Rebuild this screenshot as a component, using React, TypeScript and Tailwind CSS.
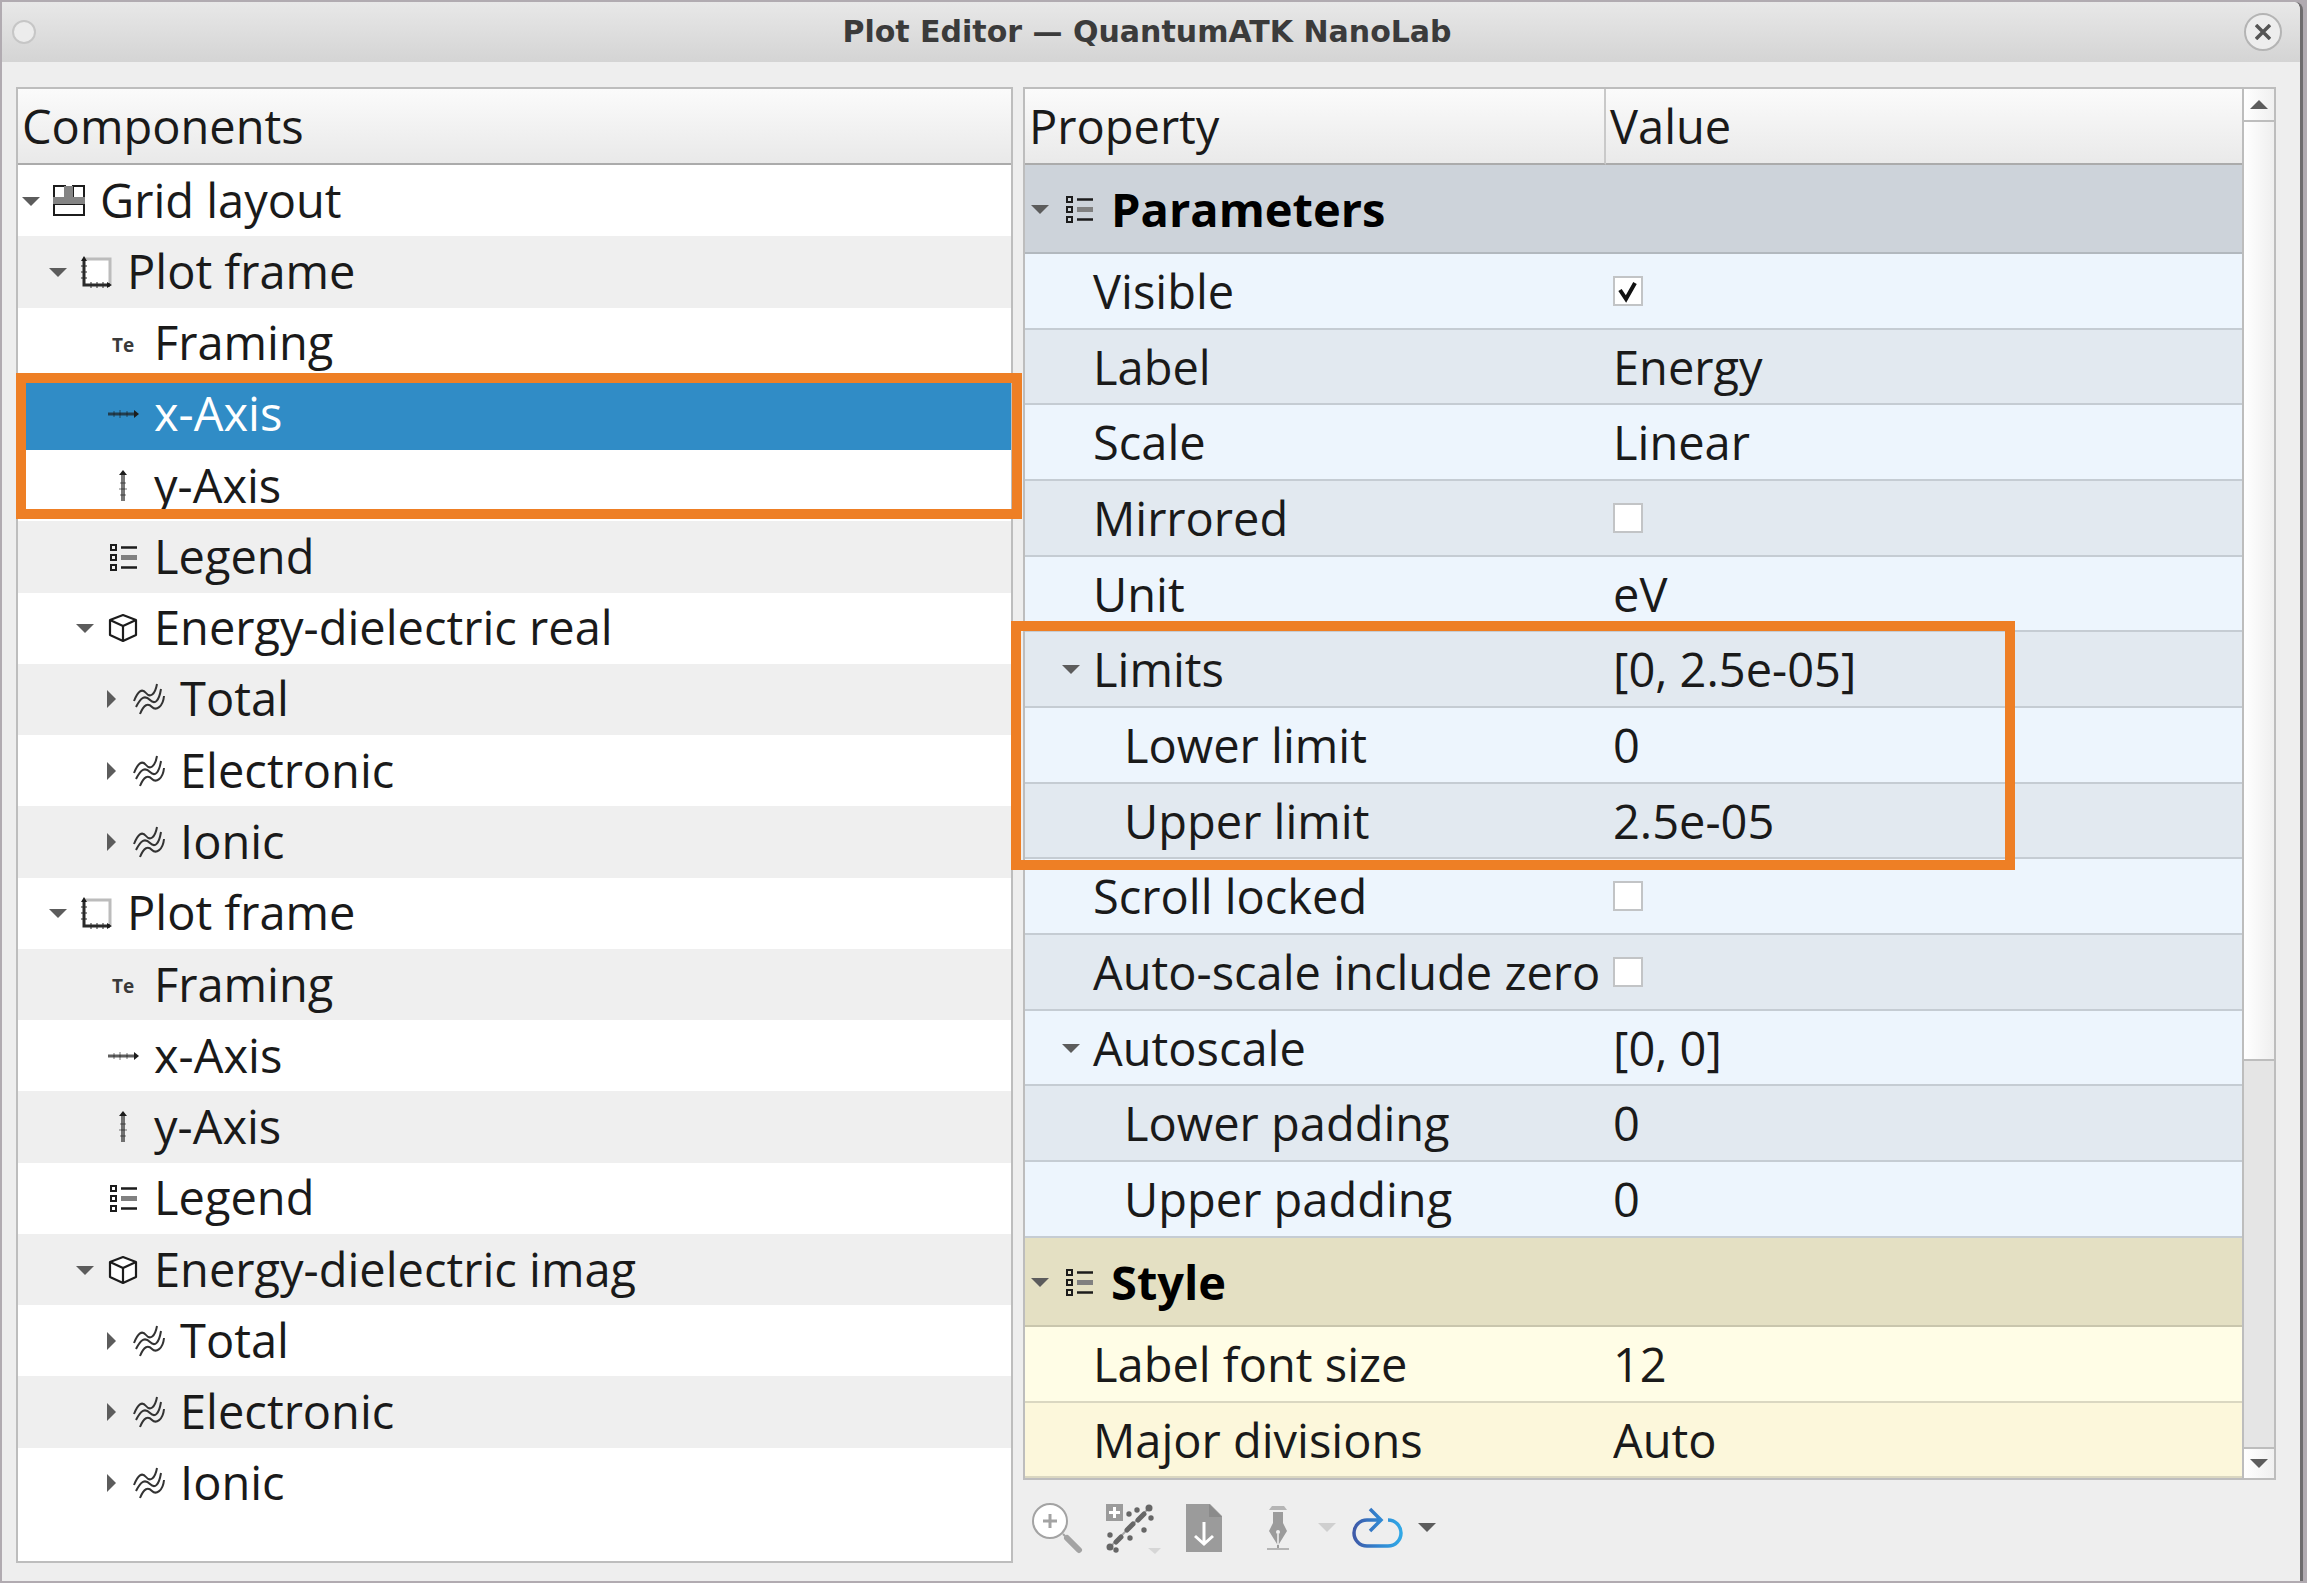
import React from 'react';

type IconName = 'grid' | 'frame' | 'text' | 'xaxis' | 'yaxis' | 'legend' | 'cube' | 'waves';

function Icon({ name }: { name: IconName }) {
  const common = { viewBox: '0 0 32 32', className: 'h-8 w-8 shrink-0', 'aria-hidden': true } as const;
  switch (name) {
    case 'grid':
      return (
        <svg {...common} fill="none">
          <path d="M1 1h11v13H1zM20 1h11v13H20zM1 19h30v11H1z" fill="#fff" stroke="#1c1c1c" strokeWidth="2" />
          <path d="M0 12h32v7H0zM11 1h9v12h-9z" fill="#848484" />
        </svg>
      );
    case 'frame':
      return (
        <svg {...common} fill="none">
          <path d="M4 3h25v25H4z" fill="#fff" />
          <path d="M4 3h26v25" stroke="#bcbcbc" strokeWidth="3" />
          <path d="M4 3v26h26" stroke="#2a2a2a" strokeWidth="3" />
          <path d="M1 10h6M1 16h6M1 22h6M11 26v6M17 26v6M23 26v6" stroke="#2a2a2a" strokeWidth="1" />
          <path d="M4 0l3 5H1zM32 29l-5 3v-6z" fill="#1c1c1c" />
        </svg>
      );
    case 'text':
      return (
        <span className="flex h-8 w-8 shrink-0 items-center justify-center pt-1 font-['Open_Sans'] text-[19px] leading-none font-bold text-[#3a3a3a]">
          Te
        </span>
      );
    case 'xaxis':
      return (
        <svg {...common} stroke="#1c1c1c" fill="#1c1c1c">
          <path d="M1 16h28" strokeWidth="3" opacity="0.7" />
          <path d="M7 13v6M13 12v8M20 13v6" strokeWidth="1" opacity="0.6" />
          <path d="M27 12l5 4-5 4z" stroke="none" />
        </svg>
      );
    case 'yaxis':
      return (
        <svg {...common} stroke="#1c1c1c" fill="#1c1c1c">
          <path d="M16 3v28" strokeWidth="4" opacity="0.6" />
          <path d="M13 13h6M12 19h8M13 25h6" strokeWidth="1" opacity="0.6" />
          <path d="M12 5l4-5 4 5z" stroke="none" />
        </svg>
      );
    case 'legend':
      return (
        <svg {...common} fill="none">
          <path d="M4 4h5v5H4zM4 14h5v5H4zM4 24h5v5H4z" stroke="#1c1c1c" strokeWidth="2" />
          <path d="M14 6.500h16M14 26.500h16" stroke="#1c1c1c" strokeWidth="2.500" />
          <path d="M14 16.500h16" stroke="#808080" strokeWidth="5" />
        </svg>
      );
    case 'cube':
      return (
        <svg {...common} fill="none" stroke="#1c1c1c" strokeWidth="2.200" strokeLinejoin="round">
          <path d="M16 3l13 5v15l-13 6-13-6V8z" fill="#fff" />
          <path d="M3 8l13 6 13-6M16 14v15" />
        </svg>
      );
    case 'waves':
      return (
        <svg {...common} fill="none" stroke="#333" strokeWidth="2">
          <path d="M1 18C5 8 9 5 13 10S22 12 24 1" />
          <path d="M3 24C8 14 12 12 17 17S26 18 28 6" />
          <path d="M7 31C11 21 15 20 19 24S30 24 31 13" />
        </svg>
      );
  }
}

function Arrow({ open }: { open: boolean }) {
  return (
    <svg viewBox="0 0 18 18" className="h-[18px] w-[18px] shrink-0" fill="#5c5c5c" aria-hidden="true">
      {open ? <path d="M0 5h18l-9 9z" /> : <path d="M5 0v18l9-9z" />}
    </svg>
  );
}

interface TreeRow {
  level: 0 | 1 | 2 | 3;
  icon: IconName;
  label: string;
  open?: boolean;
  selected?: boolean;
}

const frameRows = (kind: string, selected: boolean): TreeRow[] => [
  { level: 1, icon: 'frame', label: 'Plot frame', open: true },
  { level: 2, icon: 'text', label: 'Framing' },
  { level: 2, icon: 'xaxis', label: 'x-Axis', selected },
  { level: 2, icon: 'yaxis', label: 'y-Axis' },
  { level: 2, icon: 'legend', label: 'Legend' },
  { level: 2, icon: 'cube', label: 'Energy-dielectric ' + kind, open: true },
  { level: 3, icon: 'waves', label: 'Total', open: false },
  { level: 3, icon: 'waves', label: 'Electronic', open: false },
  { level: 3, icon: 'waves', label: 'Ionic', open: false },
];

const tree: TreeRow[] = [
  { level: 0, icon: 'grid', label: 'Grid layout', open: true },
  ...frameRows('real', true),
  ...frameRows('imag', false),
];

const indent = ['pl-1', 'pl-[31px]', 'pl-[58px]', 'pl-[84px]'];

function ComponentTree() {
  return (
    <section className="flex flex-col border-2 border-[#bdbdbd] bg-white" aria-label="Components">
      <h2 className="h-[76px] border-b-2 border-[#ababab] bg-linear-to-b from-[#fbfbfb] to-[#e9e9e9] px-1 leading-[74px]">
        Components
      </h2>
      <ul role="tree" className="grid flex-1 auto-rows-fr pb-[42px]">
        {tree.map((row, i) => (
          <li
            key={i}
            role="treeitem"
            aria-selected={!!row.selected}
            aria-expanded={row.open}
            aria-level={row.level + 1}
            className={
              'relative flex items-center whitespace-nowrap ' +
              indent[row.level] +
              (row.selected ? ' bg-[#308cc6] text-white' : i % 2 ? ' bg-[#efefef]' : ' bg-white')
            }
          >
            {row.open === undefined ? <span className="w-[18px]" /> : <Arrow open={row.open} />}
            <span className="mr-[15px] ml-[13px]">
              <Icon name={row.icon} />
            </span>
            <span className="pb-0.5">{row.label}</span>
            {row.selected && (
              <span className="pointer-events-none absolute -top-1.5 -right-[11px] -left-0.5 z-10 h-[146px] border-10 border-[#ee7f25]" />
            )}
          </li>
        ))}
      </ul>
    </section>
  );
}

interface PropRow {
  label: string;
  value: string | boolean;
  nested?: boolean;
  expandable?: boolean;
  marked?: boolean;
}

const parameters: PropRow[] = [
  { label: 'Visible', value: true },
  { label: 'Label', value: 'Energy' },
  { label: 'Scale', value: 'Linear' },
  { label: 'Mirrored', value: false },
  { label: 'Unit', value: 'eV' },
  { label: 'Limits', value: '[0, 2.5e-05]', expandable: true, marked: true },
  { label: 'Lower limit', value: '0', nested: true },
  { label: 'Upper limit', value: '2.5e-05', nested: true },
  { label: 'Scroll locked', value: false },
  { label: 'Auto-scale include zero', value: false },
  { label: 'Autoscale', value: '[0, 0]', expandable: true },
  { label: 'Lower padding', value: '0', nested: true },
  { label: 'Upper padding', value: '0', nested: true },
];

const styleRows: PropRow[] = [
  { label: 'Label font size', value: '12' },
  { label: 'Major divisions', value: 'Auto' },
];

function PropertyGroup({ title, rows, tone }: { title: string; rows: PropRow[]; tone: 'blue' | 'yellow' }) {
  const blue = tone === 'blue';
  return (
    <tbody>
      <tr className={blue ? 'h-[89px] bg-[#cdd3da]' : 'h-[89px] bg-[#e4e0c3]'}>
        <th colSpan={2} className={'border-b-2 p-0 text-left font-bold text-black ' + (blue ? 'border-[#b2b8be]' : 'border-[#c9c6ad]')}>
          <span className="flex items-center pl-1.5">
            <Arrow open />
            <span className="mr-4 ml-3.5">
              <Icon name="legend" />
            </span>
            {title}
          </span>
        </th>
      </tr>
      {rows.map((row, i) => {
        const height = i % 3 === 1 ? 'h-[75px] ' : 'h-[76px] ';
        const shade = blue ? (i % 2 ? 'bg-[#e2e9f0]' : 'bg-[#edf5fd]') : i % 2 ? 'bg-[#fcf7db]' : 'bg-[#fffde6]';
        const line = blue ? 'border-[#c5ccd3]' : 'border-[#dad7c1]';
        const id = row.label.toLowerCase().replace(/\W+/g, '-');
        return (
          <tr key={row.label} className={height + shade}>
            <td className={'relative border-b-2 p-0 whitespace-nowrap ' + line}>
              <span className={'flex items-center ' + (row.nested ? 'pl-[99px]' : row.expandable ? 'pl-[37px]' : 'pl-[68px]')}>
                {row.expandable && (
                  <span className="mr-[13px]">
                    <Arrow open />
                  </span>
                )}
                <label htmlFor={id}>{row.label}</label>
              </span>
              {row.marked && (
                <span className="pointer-events-none absolute -top-[11px] -left-[14px] z-10 h-[249px] w-[1004px] border-10 border-[#ee7f25]" />
              )}
            </td>
            <td className={'border-b-2 p-0 ' + line}>
              <span className="flex items-center pl-[7px]">
                {typeof row.value === 'boolean' ? (
                  <span className="grid">
                    <input
                      id={id}
                      type="checkbox"
                      defaultChecked={row.value}
                      className="peer col-start-1 row-start-1 h-[30px] w-[30px] appearance-none border-2 border-[#c2c4c6] bg-white"
                    />
                    <svg
                      viewBox="0 0 30 30"
                      className="pointer-events-none invisible col-start-1 row-start-1 h-[30px] w-[30px] peer-checked:visible"
                      fill="none"
                      stroke="#111"
                      strokeWidth="4"
                    >
                      <path d="M7 14l6 9 9-16" />
                    </svg>
                  </span>
                ) : (
                  <input id={id} defaultValue={row.value} className="w-full bg-transparent outline-none" />
                )}
              </span>
            </td>
          </tr>
        );
      })}
    </tbody>
  );
}

function ScrollBar() {
  const button = 'flex h-[31px] shrink-0 items-center justify-center bg-linear-to-r from-white to-[#f0f0f0]';
  return (
    <div className="flex w-[32px] shrink-0 flex-col border-l-2 border-[#bdbdbd] bg-[#e5e5e5]">
      <button aria-label="Scroll up" className={button}>
        <svg viewBox="0 0 18 9" className="h-[9px] w-[18px]" fill="#5c5c5c">
          <path d="M0 9h18L9 0z" />
        </svg>
      </button>
      <div className="flex-[943] border-y-2 border-[#bdbdbd] bg-linear-to-r from-white to-[#efefef]" />
      <div className="flex-[388]" />
      <button aria-label="Scroll down" className={button + ' border-t-2 border-[#bdbdbd]'}>
        <svg viewBox="0 0 18 9" className="h-[9px] w-[18px]" fill="#5c5c5c">
          <path d="M0 0h18L9 9z" />
        </svg>
      </button>
    </div>
  );
}

function Toolbar() {
  return (
    <div className="flex flex-1 items-center pt-3 pl-[9px]" role="toolbar">
      <button aria-label="Zoom in">
        <svg viewBox="0 0 52 52" className="h-[52px] w-[52px]" fill="none">
          <circle cx="18" cy="19" r="17" fill="#fff" stroke="#a3a3a3" strokeWidth="2" />
          <path d="M11 19h14M18 12v14" stroke="#a3a3a3" strokeWidth="3" />
          <path d="M31 32l4 4" stroke="#a3a3a3" strokeWidth="2" />
          <path d="M35 36l12 12" stroke="#a3a3a3" strokeWidth="6" strokeLinecap="round" />
        </svg>
      </button>
      <button aria-label="Auto adjust" className="ml-[21px]">
        <svg viewBox="0 0 56 52" className="h-[52px] w-14" fill="none">
          <path d="M1 2h17v17H1z" fill="#9b9b9b" />
          <path d="M9.500 5v11M4 10.500h11" stroke="#fff" strokeWidth="3" />
          <path d="M5 45L44 6" stroke="#a8a8a8" strokeWidth="2" />
          <path d="M11 40l5-5M22 28l6-6M33 18l6-6" stroke="#666" strokeWidth="5" strokeLinecap="round" />
          <g fill="#666">
            <circle cx="5" cy="45" r="3.500" />
            <circle cx="44" cy="6" r="3.500" />
            <circle cx="24" cy="12" r="2.700" />
            <circle cx="32" cy="8" r="2.700" />
            <circle cx="46" cy="16" r="2.700" />
            <circle cx="39" cy="28" r="2.700" />
            <circle cx="25" cy="36" r="2.700" />
            <circle cx="5" cy="33" r="2.700" />
            <circle cx="11" cy="48" r="2.700" />
          </g>
          <path d="M43 46h13l-6 6z" fill="#d6d6d6" />
        </svg>
      </button>
      <button aria-label="Save to file" className="ml-[25px]">
        <svg viewBox="0 0 36 48" className="h-12 w-9" fill="none">
          <path d="M0 0h24l12 12v36H0z" fill="#9b9b9b" />
          <path d="M23 0v13h13z" fill="#8b8b8b" />
          <path d="M18 18v22M9 32l9 8 9-8" stroke="#fff" strokeWidth="3" />
        </svg>
      </button>
      <button aria-label="Draw" className="ml-11">
        <svg viewBox="0 0 24 46" className="h-[46px] w-6">
          <path d="M6 1h12l3 4H3z" fill="#b5b5b5" />
          <path d="M7 7h10v11l4 8-8 13v5h-2v-5L3 26l4-8z" fill="#9b9b9b" />
          <path d="M11 29h2v11h-2z" fill="#ddd" />
          <circle cx="12" cy="27" r="2" fill="#eee" />
          <path d="M1 43h22v2H1z" fill="#b5b5b5" />
        </svg>
      </button>
      <button aria-label="Draw options" className="ml-7">
        <svg viewBox="0 0 18 9" className="h-[9px] w-[18px]" fill="#cfcfcf">
          <path d="M0 0h18L9 9z" />
        </svg>
      </button>
      <button aria-label="Refresh" className="ml-4">
        <svg viewBox="0 0 52 42" className="h-[42px] w-[52px]" fill="none">
          <defs>
            <linearGradient id="loop" x1="0" x2="1">
              <stop offset="0" stopColor="#3f5aa8" />
              <stop offset="0.5" stopColor="#3183cf" />
              <stop offset="1" stopColor="#31a8e6" />
            </linearGradient>
          </defs>
          <path d="M29 13H15a13 13 0 0 0 0 26h21a13 13 0 0 0 0-26M18 2l11 11-11 11" stroke="url(#loop)" strokeWidth="3.500" />
        </svg>
      </button>
      <button aria-label="Refresh options" className="ml-3.5">
        <svg viewBox="0 0 18 9" className="h-[9px] w-[18px]" fill="#5c5c5c">
          <path d="M0 0h18L9 9z" />
        </svg>
      </button>
    </div>
  );
}

export default function App() {
  return (
    <div className="min-h-screen bg-[#b1abb1] pt-0.5 pr-1 pb-0.5 pl-0.5">
      <main className="flex min-h-[calc(100vh-4px)] flex-col rounded-tr-lg border-r-3 border-[#6e6c6e] bg-[#eeeeee] font-['Open_Sans',sans-serif] text-[47px] leading-[62px] text-[#1a1a1a]">
        <header className="flex h-[60px] items-center rounded-tr-lg bg-linear-to-b from-[#e8e8e8] to-[#d4d4d4] pr-[18px] pl-[10px]">
          <div className="flex flex-1">
            <button aria-label="Window menu" className="h-6 w-6 rounded-full border-2 border-[#c6c6c6] bg-[#ececec]" />
          </div>
          <h1 className="font-['DejaVu_Sans'] text-[30px] leading-none font-bold text-[#3b3b3b]">
            Plot Editor — QuantumATK NanoLab
          </h1>
          <div className="flex flex-1 justify-end">
            <button
              aria-label="Close"
              className="flex h-[38px] w-[38px] items-center justify-center rounded-full border-2 border-[#b4b4b4] bg-[#ededed]"
            >
              <svg viewBox="0 0 16 16" className="h-4 w-4" fill="none" stroke="#555" strokeWidth="3.500">
                <path d="M1 1l14 14M15 1L1 15" />
              </svg>
            </button>
          </div>
        </header>
        <div className="grid flex-1 grid-cols-[997fr_1253fr] gap-2.5 pt-[25px] pr-6 pb-[18px] pl-3.5">
          <ComponentTree />
          <div className="flex flex-col">
            <section className="flex border-2 border-[#bdbdbd]" aria-label="Properties">
              <table className="w-full table-fixed border-separate border-spacing-0">
                <colgroup>
                  <col className="w-[581px]" />
                  <col />
                </colgroup>
                <thead>
                  <tr className="h-[76px] bg-linear-to-b from-[#fbfbfb] to-[#e9e9e9] text-left">
                    <th className="border-r-2 border-b-2 border-r-[#c9c9c9] border-b-[#ababab] px-1 py-0 font-normal">Property</th>
                    <th className="border-b-2 border-[#ababab] px-1 py-0 font-normal">Value</th>
                  </tr>
                </thead>
                <PropertyGroup title="Parameters" rows={parameters} tone="blue" />
                <PropertyGroup title="Style" rows={styleRows} tone="yellow" />
              </table>
              <ScrollBar />
            </section>
            <Toolbar />
          </div>
        </div>
      </main>
    </div>
  );
}
